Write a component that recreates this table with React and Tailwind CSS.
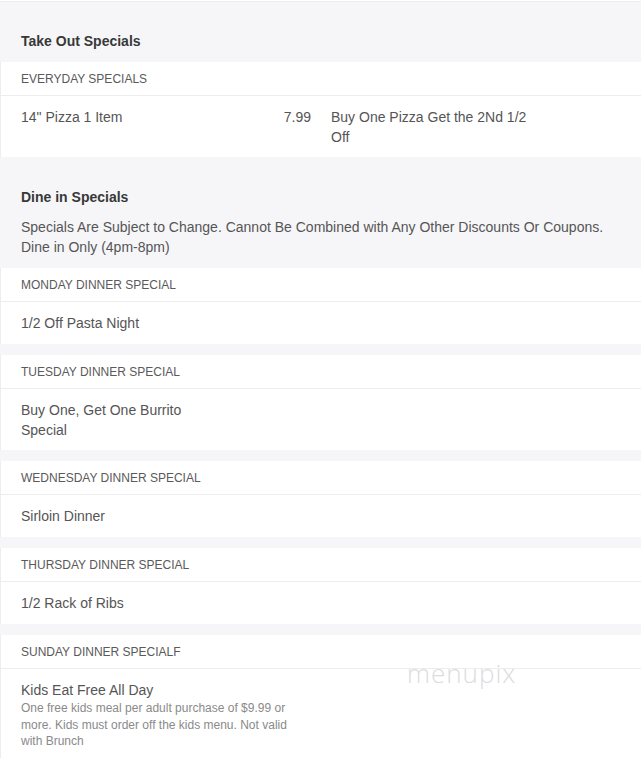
import React from 'react';

const font = { fontFamily: '"Liberation Sans", Arial, sans-serif' };

const dinner = [
  { day: 'MONDAY DINNER SPECIAL', name: '1/2 Off Pasta Night' },
  { day: 'TUESDAY DINNER SPECIAL', name: 'Buy One, Get One Burrito Special', wrap: true },
  { day: 'WEDNESDAY DINNER SPECIAL', name: 'Sirloin Dinner' },
  { day: 'THURSDAY DINNER SPECIAL', name: '1/2 Rack of Ribs' },
];

const GroupHead = ({ children }) => (
  <div className="bg-white border-b border-[#ededf0] px-[20px] pt-[9px] pb-[7px] text-[12px] leading-[17px] text-[#5a5a5a]">
    {children}
  </div>
);

export default function App() {
  return (
    <div className="w-[641px] min-h-[758px] bg-[#f6f6f9] text-[#555]" style={font}>
      {/* Take Out */}
      <div className="border-t border-[#ebebf0] mt-[1px] pt-[29px] pb-[11px] px-[21px]">
        <h2 className="text-[14px] leading-[20px] font-bold text-[#383838]">Take Out Specials</h2>
      </div>
      <div className="border-l border-[#ededf0]">
        <GroupHead>EVERYDAY SPECIALS</GroupHead>
        <div className="bg-white flex px-[20px] pt-[11px] pb-[10px] text-[14px] leading-[20px]">
          <div className="w-[240px]">14" Pizza 1 Item</div>
          <div className="w-[50px] text-right">7.99</div>
          <div className="w-[205px] ml-[20px]">Buy One Pizza Get the 2Nd 1/2 Off</div>
        </div>
      </div>

      {/* Dine in */}
      <div className="pt-[30px] pb-[11px] px-[21px]">
        <h2 className="text-[14px] leading-[20px] font-bold text-[#383838]">Dine in Specials</h2>
        <p className="mt-[10px] text-[14px] leading-[20px]">
          Specials Are Subject to Change. Cannot Be Combined with Any Other Discounts Or Coupons.
          Dine in Only (4pm-8pm)
        </p>
      </div>

      <div className="flex flex-col gap-[11px]">
        {dinner.map((d) => (
          <div key={d.day} className="border-l border-[#ededf0]">
            <GroupHead>{d.day}</GroupHead>
            <div
              className={
                d.wrap
                  ? 'bg-white px-[20px] pt-[11px] pb-[10px] text-[14px] leading-[20px]'
                  : 'bg-white px-[20px] pt-[11px] pb-[11px] text-[14px] leading-[20px]'
              }
            >
              <div className="w-[190px]">{d.name}</div>
            </div>
          </div>
        ))}

        <div className="border-l border-[#ededf0] relative">
          <GroupHead>SUNDAY DINNER SPECIALF</GroupHead>
          <div className="bg-white px-[20px] pt-[11px] pb-[10px]">
            <div className="text-[14px] leading-[20px]">Kids Eat Free All Day</div>
            <div className="w-[272px] text-[12px] leading-[16.5px] text-[#8a8a8a]">
              One free kids meal per adult purchase of $9.99 or more. Kids must order off the kids menu. Not valid
              with Brunch
            </div>
          </div>
          <div
            className="absolute left-[406px] top-[23px] text-[26px] leading-[30px] font-light tracking-[1px] text-[#dcdce0]"
            style={{ fontFamily: '"Open Sans", sans-serif' }}
          >
            menupix
          </div>
        </div>
      </div>
    </div>
  );
}
